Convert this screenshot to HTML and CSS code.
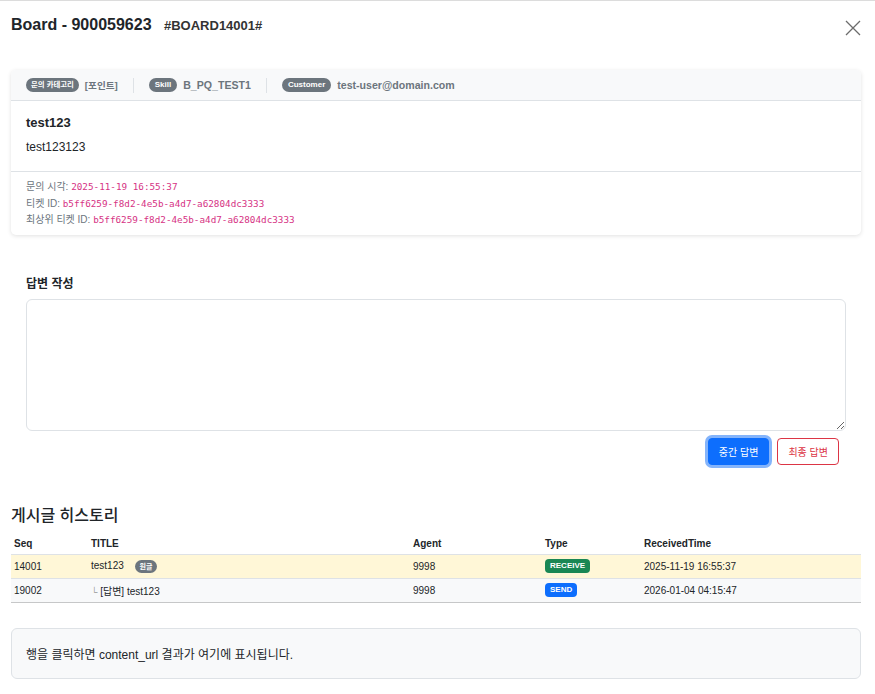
FILE: index.html
```html
<!DOCTYPE html>
<html lang="ko">
<head>
  <meta charset="UTF-8">
  <title>Board - 900059623</title>
  <link rel="stylesheet" href="styles.css">
</head>
<body>
  <div class="modal">
    <div class="modal-header">
      <h5 class="modal-title">Board - 900059623 <span class="board-key">#BOARD14001#</span></h5>
      <button class="btn-close" aria-label="Close">
        <svg width="16" height="16" viewBox="0 0 16 16"><path d="M1 1L15 15M15 1L1 15" stroke="#6c6c6c" stroke-width="1.3" fill="none"/></svg>
      </button>
    </div>

    <div class="modal-body">
      <!-- inquiry card -->
      <div class="card">
        <div class="card-header">
          <span class="meta"><span class="badge pill ko">문의 카테고리</span><span class="meta-val ko">[포인트]</span></span>
          <span class="sep"></span>
          <span class="meta"><span class="badge pill">Skill</span><span class="meta-val">B_PQ_TEST1</span></span>
          <span class="sep"></span>
          <span class="meta"><span class="badge pill">Customer</span><span class="meta-val">test-user@domain.com</span></span>
        </div>
        <div class="card-body">
          <h6 class="card-title">test123</h6>
          <p class="card-text">test123123</p>
        </div>
        <div class="card-footer">
          <div>문의 시각: <code>2025-11-19 16:55:37</code></div>
          <div>티켓 ID: <code>b5ff6259-f8d2-4e5b-a4d7-a62804dc3333</code></div>
          <div>최상위 티켓 ID: <code>b5ff6259-f8d2-4e5b-a4d7-a62804dc3333</code></div>
        </div>
      </div>

      <!-- reply form -->
      <div class="reply">
        <label class="reply-label">답변 작성</label>
        <textarea class="form-control" rows="6"></textarea>
        <div class="reply-actions">
          <button class="btn btn-primary focus">중간 답변</button>
          <button class="btn btn-outline-danger">최종 답변</button>
        </div>
      </div>

      <!-- history -->
      <h5 class="history-title">게시글 히스토리</h5>
      <table class="table">
        <thead>
          <tr>
            <th class="col-seq">Seq</th>
            <th class="col-title">TITLE</th>
            <th class="col-agent">Agent</th>
            <th class="col-type">Type</th>
            <th>ReceivedTime</th>
          </tr>
        </thead>
        <tbody>
          <tr class="row-warning">
            <td>14001</td>
            <td>test123 <span class="badge pill small">원글</span></td>
            <td>9998</td>
            <td><span class="badge tag bg-success">RECEIVE</span></td>
            <td>2025-11-19 16:55:37</td>
          </tr>
          <tr class="row-light">
            <td>19002</td>
            <td><span class="reply-mark">└</span> [답변] test123</td>
            <td>9998</td>
            <td><span class="badge tag bg-primary">SEND</span></td>
            <td>2026-01-04 04:15:47</td>
          </tr>
        </tbody>
      </table>

      <div class="content-box">행을 클릭하면 content_url 결과가 여기에 표시됩니다.</div>
    </div>
  </div>
</body>
</html>
```

FILE: styles.css
```css
body {
  margin: 0;
  background: #fff;
  color: #212529;
  font-family: 'Liberation Sans', 'Noto Sans CJK KR', sans-serif;
}

.modal {
  border-top: 1px solid #dcdcdc;
  width: 875px;
}

.modal-header {
  display: flex;
  justify-content: space-between;
  align-items: flex-start;
  padding: 15px 14px 0 11px;
  height: 55px;
  box-sizing: border-box;
}

.modal-title {
  margin: 0;
  font-size: 16px;
  font-weight: bold;
  line-height: 18px;
}

.board-key {
  margin-left: 8px;
  font-size: 13px;
  color: #333;
}

.btn-close {
  border: none;
  background: none;
  padding: 0;
  margin-top: 4px;
  cursor: pointer;
}

.modal-body {
  padding: 14px 14px 0 11px;
}

.card {
  border-radius: 5px;
  box-shadow: 0 1px 4px rgba(0,0,0,0.12);
  background: #fff;
}

.card-header {
  display: flex;
  align-items: center;
  height: 30px;
  padding: 0 15px;
  background: #f8f9fa;
  border-bottom: 1px solid #dee2e6;
  border-radius: 5px 5px 0 0;
}

.meta {
  display: flex;
  align-items: center;
  gap: 6px;
}

.meta-val {
  font-size: 10.6px;
  font-weight: bold;
  color: #6c757d;
}

.meta-val.ko {
  font-size: 9.6px;
}

.sep {
  width: 1px;
  height: 15px;
  background: #dee2e6;
  margin: 0 15px;
}

.badge {
  display: inline-block;
  color: #fff;
  font-weight: bold;
  font-size: 8px;
  line-height: 1;
  white-space: nowrap;
}

.badge.pill {
  background: #6c757d;
  border-radius: 7px;
  padding: 3px 5px;
}

.card-header .badge.pill {
  font-size: 8px;
  padding: 3px 6px;
}

.card-header .badge.pill.ko {
  font-size: 7.4px;
  padding: 3px 5px;
}

.badge.small {
  font-size: 7px;
  margin-left: 8px;
  padding: 3px 5px;
}

.badge.tag {
  border-radius: 4px;
  padding: 3px 5px;
}

.bg-success { background: #198754; }
.bg-primary { background: #0d6efd; }

.card-body {
  padding: 14px 15px 17px;
  border-bottom: 1px solid #dee2e6;
}

.card-title {
  margin: 0 0 10px;
  font-size: 13px;
  font-weight: bold;
}

.card-text {
  margin: 0;
  font-size: 12px;
}

.card-footer {
  padding: 7px 15px 6px;
  font-size: 10px;
  line-height: 16.5px;
  color: #6c757d;
}

code {
  font-family: 'DejaVu Sans Mono', monospace;
  font-size: 9.3px;
  color: #d63384;
}

.reply {
  padding: 39px 15px 0;
}

.reply-label {
  display: block;
  font-size: 12px;
  font-weight: bold;
  margin-bottom: 8px;
}

.form-control {
  display: block;
  width: 100%;
  height: 132px;
  box-sizing: border-box;
  border: 1px solid #dee2e6;
  border-radius: 6px;
  resize: vertical;
}

.reply-actions {
  display: flex;
  justify-content: flex-end;
  gap: 8px;
  margin-top: 7px;
  padding-right: 7px;
}

.btn {
  height: 27px;
  padding: 0 10px;
  font-size: 10px;
  font-family: inherit;
  border-radius: 4px;
  cursor: pointer;
}

.btn-primary {
  background: #0d6efd;
  border: 1px solid #0d6efd;
  color: #fff;
}

.btn-primary.focus {
  box-shadow: 0 0 0 3px #84b4fb;
}

.btn-outline-danger {
  background: #fff;
  border: 1px solid #dc3545;
  color: #dc3545;
}

.history-title {
  margin: 37px 0 7px;
  font-size: 16px;
  font-weight: 500;
}

.table {
  width: 850px;
  border-collapse: collapse;
  font-size: 10px;
}

.table th {
  text-align: left;
  font-weight: bold;
  padding: 0 3px;
  height: 21px;
  border-bottom: 1px solid #dee2e6;
}

.table td {
  padding: 0 3px;
  height: 23px;
  border-bottom: 1px solid #dee2e6;
}

.table tbody tr:last-child td {
  border-bottom-color: #c6c7c8;
}

.col-seq { width: 71px; }
.col-title { width: 316px; }
.col-agent { width: 126px; }
.col-type { width: 93px; }

.row-warning td { background: #fff7d7; }
.row-light td { background: #f8f9fa; }

.reply-mark {
  color: #999;
  font-size: 9px;
}

.content-box {
  margin-top: 25px;
  width: 850px;
  box-sizing: border-box;
  padding: 16px 14px;
  background: #f8f9fa;
  border: 1px solid #dee2e6;
  border-radius: 6px;
  font-size: 12px;
}
```
